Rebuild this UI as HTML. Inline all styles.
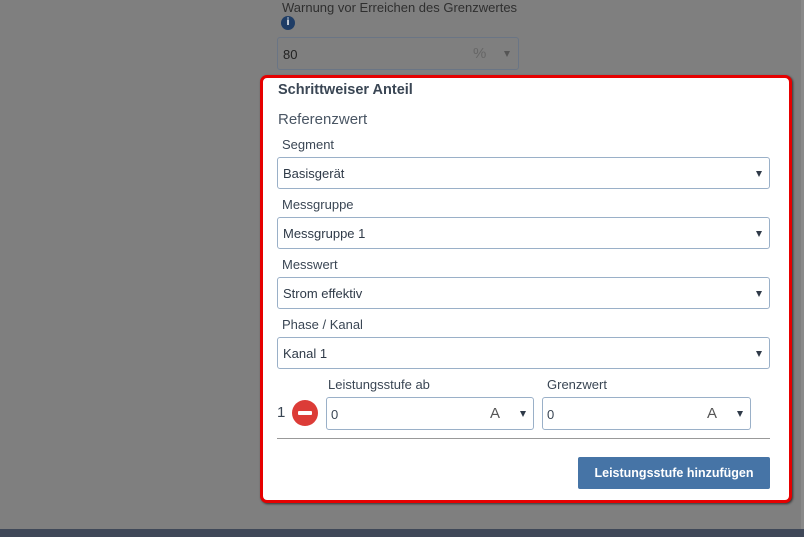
<!DOCTYPE html>
<html><head><meta charset="utf-8"><style>
*{box-sizing:border-box;margin:0;padding:0}
body{width:804px;height:537px;background:#7f7f7f;font-family:"Liberation Sans",sans-serif;position:relative;overflow:hidden;color:#3a4654}
.a{position:absolute}
.lbl{font-size:13px;color:#3a4654}
.sel{position:absolute;left:277px;width:493px;height:32px;border:1px solid #9ab0c8;border-radius:3px;background:#fff;font-size:13px;padding:8px 0 0 5px;color:#2f3a48}
.sel:after{content:"";position:absolute;right:7px;top:13px;border-left:3.5px solid transparent;border-right:3.5px solid transparent;border-top:6px solid #2f3a48}
.inp{position:absolute;top:397px;height:33px;border:1px solid #9ab0c8;border-radius:3px;background:#fff;font-size:13px;padding:9px 0 0 4px}
.inp:after{content:"";position:absolute;right:7px;top:13px;border-left:3.5px solid transparent;border-right:3.5px solid transparent;border-top:6px solid #2f3a48}
.u{position:absolute;right:33px;top:7px;font-size:15px;color:#555}
</style></head><body>
<div class="a" style="left:282px;top:0;font-size:13px;color:#2f2f2f">Warnung vor Erreichen des Grenzwertes</div>
<div class="a" style="left:281px;top:16px;width:14px;height:14px;border-radius:50%;background:#1f3d66;color:#fff;font-size:10px;font-weight:bold;text-align:center;line-height:14px">i</div>
<div class="a" style="left:277px;top:37px;width:242px;height:33px;border:1px solid #6a7585;border-radius:3px;background:#7f7f7f;font-size:13px;padding:9px 0 0 5px;color:#222">80<span style="position:absolute;left:195px;top:7px;font-size:15px;color:#666">%</span><span style="position:absolute;left:226px;top:13px;width:0;height:0;border-left:3.5px solid transparent;border-right:3.5px solid transparent;border-top:6px solid #555"></span></div>
<div class="a" style="left:260px;top:75px;width:532px;height:428px;background:#fff;border:3px solid #e60000;border-radius:7px;box-shadow:1px 1px 2px #333"></div>
<div class="a" style="left:278px;top:82px;font-size:14.5px;font-weight:bold;color:#3a4654">Schrittweiser Anteil</div>
<div class="a" style="left:278px;top:111px;font-size:15px;color:#4a5664">Referenzwert</div>
<div class="a lbl" style="left:282px;top:137px">Segment</div>
<div class="sel" style="top:157px">Basisgerät</div>
<div class="a lbl" style="left:282px;top:197px">Messgruppe</div>
<div class="sel" style="top:217px">Messgruppe 1</div>
<div class="a lbl" style="left:282px;top:257px">Messwert</div>
<div class="sel" style="top:277px">Strom effektiv</div>
<div class="a lbl" style="left:282px;top:317px">Phase / Kanal</div>
<div class="sel" style="top:337px">Kanal 1</div>
<div class="a lbl" style="left:328px;top:377px">Leistungsstufe ab</div>
<div class="a lbl" style="left:547px;top:377px">Grenzwert</div>
<div class="a" style="left:277px;top:404px;font-size:15px;color:#3a4654">1</div>
<div class="a" style="left:292px;top:400px;width:26px;height:26px;border-radius:50%;background:#dc3c37"><div style="position:absolute;left:6px;top:11px;width:14px;height:4px;background:#fff;border-radius:1px"></div></div>
<div class="inp" style="left:326px;width:208px">0<span class="u">A</span></div>
<div class="inp" style="left:542px;width:209px">0<span class="u">A</span></div>
<div class="a" style="left:277px;top:438px;width:493px;height:1px;background:#999"></div>
<div class="a" style="left:578px;top:457px;width:192px;height:32px;background:#4674a6;border-radius:2px;color:#fff;font-size:12.5px;font-weight:bold;text-align:center;line-height:32px">Leistungsstufe hinzufügen</div>
<div class="a" style="left:0;top:529px;width:804px;height:8px;background:#3f4858"></div>
<div class="a" style="left:801px;top:0;width:3px;height:529px;background:#8a8a8a"></div>
</body></html>
